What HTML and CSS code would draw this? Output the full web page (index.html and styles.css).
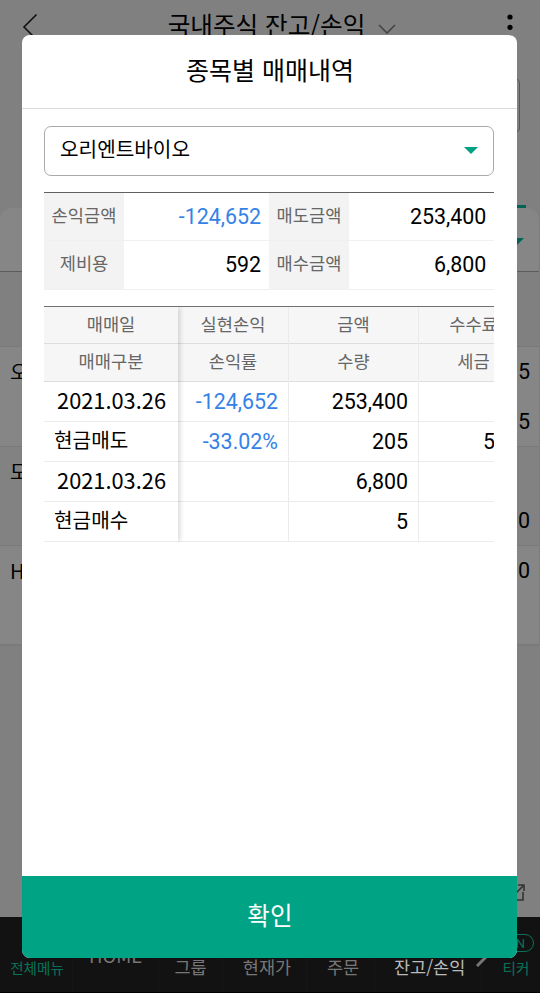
FILE: index.html
```
<!DOCTYPE html>
<html lang="ko">
<head>
    <meta charset="UTF-8">
    <meta name="viewport" content="width=device-width, initial-scale=1.0">
    <title>종목별 매매내역</title>
    <link rel="stylesheet" href="styles.css">
</head>
<body>
    <div class="app">
        <header class="app-header">
            <svg class="back" width="16" height="28" viewBox="0 0 16 28"><path d="M14.5 1.5 L2 14 L15 27"/></svg>
            <div class="app-title">
                <span>국내주식 잔고/손익</span>
                <svg width="18" height="10" viewBox="0 0 18 10"><path d="M1 1 L9 9 L17 1"/></svg>
            </div>
            <svg class="more" width="6" height="28" viewBox="0 0 6 28"><circle cx="3" cy="3" r="2.6"/><circle cx="3" cy="13.3" r="2.6"/><circle cx="3" cy="23.6" r="2.6"/></svg>
        </header>

        <main class="balance">
            <div class="account"></div>
            <div class="tab-line"></div>
            <div class="card">
                <div class="card-filter"><span class="arrow"></span></div>
                <div class="card-head"></div>
                <div class="stock"><div><span>오</span><b>5</b></div><div><b>5</b></div></div>
                <div class="stock"><div><span>모</span></div><div><b>0</b></div></div>
                <div class="stock"><div><span>H</span><b>0</b></div><div></div></div>
            </div>
            <svg class="popup-icon" width="20" height="20" viewBox="0 0 20 20"><path d="M8 4 H2 V18 H17 V10 M8 13 L18 3 M12 3 H18 V9"/></svg>
        </main>

        <nav class="bottom-nav">
            <div class="nav-item all"><svg width="32" height="17" viewBox="0 0 32 17"><path d="M1 1 H31 M1 8 H31 M1 15 H31"/></svg>전체메뉴</div>
            <div class="nav-item home">HOME</div>
            <div class="nav-item group">그룹</div>
            <div class="nav-item price">현재가</div>
            <div class="nav-item order">주문</div>
            <div class="nav-item active">잔고/손익<svg width="12" height="12" viewBox="0 0 12 12"><path d="M1 11 L11 1"/></svg></div>
            <div class="nav-item ticker"><span class="on">ON</span>티커</div>
        </nav>
    </div>

    <div class="modal">
        <h1>종목별 매매내역</h1>
        <div class="modal-body">
            <div class="select">오리엔트바이오<span class="arrow"></span></div>

            <div class="summary">
                <div class="label">손익금액</div>
                <div class="value minus">-124,652</div>
                <div class="label">매도금액</div>
                <div class="value">253,400</div>
                <div class="label">제비용</div>
                <div class="value">592</div>
                <div class="label">매수금액</div>
                <div class="value">6,800</div>
            </div>

            <div class="history">
                <div class="col fixed">
                    <div class="th">매매일</div>
                    <div class="th">매매구분</div>
                    <div class="td date">2021.03.26</div>
                    <div class="td type">현금매도</div>
                    <div class="td date">2021.03.26</div>
                    <div class="td type">현금매수</div>
                </div>
                <div class="col profit">
                    <div class="th">실현손익</div>
                    <div class="th">손익률</div>
                    <div class="td minus">-124,652</div>
                    <div class="td minus">-33.02%</div>
                    <div class="td"></div>
                    <div class="td"></div>
                </div>
                <div class="col amount">
                    <div class="th">금액</div>
                    <div class="th">수량</div>
                    <div class="td">253,400</div>
                    <div class="td">205</div>
                    <div class="td">6,800</div>
                    <div class="td">5</div>
                </div>
                <div class="col fee">
                    <div class="th">수수료</div>
                    <div class="th">세금</div>
                    <div class="td"></div>
                    <div class="td">5</div>
                    <div class="td"></div>
                    <div class="td"></div>
                </div>
            </div>
        </div>
        <button class="confirm">확인</button>
    </div>
</body>
</html>
```

FILE: styles.css
```
* {
    box-sizing: border-box;
}
body {
    margin: 0;
    position: relative;
    width: 540px;
    height: 993px;
    overflow: hidden;
    font-family: Roboto, "Noto Sans CJK KR", sans-serif;
    color: #000;
}
svg {
    fill: none;
    stroke-width: 1.6;
    flex: none;
}

/* dimmed screen behind the dialog */
.app {
    display: flex;
    flex-direction: column;
    height: 993px;
    background: #808080;
}
.app-header {
    display: flex;
    justify-content: space-between;
    align-items: flex-start;
    height: 78px;
    padding: 13px 27px 0 22px;
    font-family: "Noto Sans CJK KR", sans-serif;
}
.back {
    stroke: #111;
}
.app-title {
    display: flex;
    align-items: center;
    gap: 13px;
    height: 26px;
    margin: -2px 0 0 19px;
    font-size: 24.6px;
    line-height: 26px;
}
.app-title svg {
    stroke: #444;
    margin-top: 10px;
}
.more {
    fill: #000;
    margin-top: 1px;
}
.balance {
    flex: 1;
    display: flex;
    flex-direction: column;
}
.account {
    height: 55px;
    margin: 0 20px 0 24px;
    border: 1px solid #585858;
    border-radius: 5px;
}
.tab-line {
    width: 110px;
    height: 4px;
    margin: 72px 14px 0 auto;
    background: #006450;
}
.card {
    height: 437px;
    margin-top: -1px;
    background: #868686;
    border-right: 1px solid #7c7c7c;
    border-bottom: 1px solid #7b7b7b;
    border-radius: 12px 12px 0 0;
}
.card-filter {
    display: flex;
    justify-content: flex-end;
    height: 64px;
    padding: 30px 15px 0 0;
    border-bottom: 1px solid #5c5c5c;
}
.arrow {
    height: 0;
    border: 7px solid transparent;
    border-top-color: #00a182;
    border-bottom: 0;
}
.card-filter .arrow {
    border-top-color: #006450;
}
.card-head {
    height: 75px;
    background: #808080;
    border-bottom: 1px solid #7a7a7a;
}
.stock {
    height: 99.5px;
    padding: 0 9px 0 10px;
    border-bottom: 1px solid #7a7a7a;
    font-size: 21.5px;
}
.stock:nth-child(4) {
    background: #828282;
}
.stock div {
    display: flex;
    height: 49.5px;
    align-items: center;
}
.stock span {
    font-family: "Noto Sans CJK KR", sans-serif;
    font-size: 20px;
}
.stock b {
    margin-left: auto;
    font-weight: 400;
}
.popup-icon {
    margin: auto 14px 15px auto;
    stroke: #333;
}
.bottom-nav {
    display: flex;
    height: 76px;
    background: #121212;
    border-bottom: 1px solid #000;
    font-family: "Noto Sans CJK KR", sans-serif;
    font-size: 17.5px;
    color: #777;
}
.nav-item {
    display: flex;
    flex-direction: column;
    align-items: center;
    justify-content: flex-end;
    padding-bottom: 13px;
    line-height: 24px;
    white-space: nowrap;
    border-right: 1px solid #161616;
}
.all {
    width: 73px;
    padding-bottom: 12px;
    padding-left: 2px;
    font-size: 14.6px;
    color: #087259;
}
.all svg {
    stroke: #087259;
    margin-bottom: 7px;
}
.home {
    width: 86px;
    padding-bottom: 25px;
    font-size: 18.5px;
}
.group {
    width: 64px;
}
.price {
    width: 84px;
    padding-left: 5px;
}
.order {
    width: 68px;
    padding-left: 5px;
}
.active {
    flex-direction: row;
    align-items: flex-end;
    justify-content: flex-start;
    gap: 11px;
    width: 107px;
    padding-left: 19px;
    color: #bbb;
}
.active svg {
    stroke: #777;
    stroke-width: 3;
    margin-bottom: 12px;
}
.ticker {
    flex: 1;
    border: 0;
    padding-left: 10px;
    padding-bottom: 12px;
    font-size: 14.6px;
    color: #087259;
}
.on {
    width: 36px;
    height: 18px;
    margin-bottom: 4px;
    border: 1.5px solid #087259;
    border-radius: 9px;
    font: 13px/17px Roboto, sans-serif;
    text-align: right;
    padding-right: 8px;
}

/* dialog */
.modal {
    position: absolute;
    left: 22.4px;
    top: 34.5px;
    width: 495px;
    height: 923px;
    display: flex;
    flex-direction: column;
    overflow: hidden;
    background: #fff;
    border-radius: 8px;
}
h1 {
    height: 74px;
    margin: 0;
    border-bottom: 1px solid #d9d9d9;
    font: 400 25px/68px "Noto Sans CJK KR", sans-serif;
    text-align: center;
}
.modal-body {
    flex: 1;
    padding: 17.5px 23px 0 21.6px;
}
.select {
    display: flex;
    align-items: center;
    justify-content: space-between;
    height: 50px;
    padding: 0 15px 4px;
    border: 1.5px solid #aaa;
    border-radius: 7px;
    font: 20.2px/28px "Noto Sans CJK KR", sans-serif;
}
.select .arrow {
    margin-top: 3px;
}
.summary {
    display: grid;
    grid-template-columns: 80px 145px 80px 1fr;
    grid-template-rows: 48px 49px;
    margin-top: 15.5px;
    border-top: 1px solid #606060;
    font-size: 21.4px;
}
.summary div {
    line-height: 47px;
    border-bottom: 1px solid #f0f0f0;
}
.summary .label, .th {
    font-family: "Noto Sans CJK KR", sans-serif;
    font-size: 17.6px;
    color: #666;
    text-align: center;
}
.summary .label {
    background: #f3f3f3;
    line-height: 43px;
}
.value {
    padding-right: 8px;
    text-align: right;
}
.minus {
    color: #3482e8;
}
.history {
    display: flex;
    margin-top: 16px;
    border-top: 1px solid #707070;
    overflow: hidden;
}
.col {
    flex: none;
    width: 130px;
    border-right: 1px solid #ebebeb;
}
.th {
    height: 37px;
    line-height: 33px;
    background: #f6f6f6;
    border-bottom: 1px solid #ddd;
}
.th + .th {
    height: 38px;
}
.td {
    height: 40px;
    padding-right: 9px;
    border-bottom: 1px solid #ebebeb;
    font-size: 21.4px;
    line-height: 40px;
    text-align: right;
}
.fixed {
    position: relative;
    width: 134px;
    border: 0;
    box-shadow: 1px 0 6px rgba(0, 0, 0, 0.2);
}
.fixed .td {
    background: #fff;
    font-family: "Noto Sans CJK KR", sans-serif;
    line-height: 36px;
}
.fixed .date {
    padding-right: 12px;
    font-size: 21.8px;
}
.fixed .type {
    padding-left: 10px;
    font-size: 20.2px;
    text-align: left;
}
.profit {
    width: 111px;
}
.profit .td, .amount .td {
    padding-right: 10px;
}
.fee {
    width: 110px;
}
.fee .td {
    padding-right: 33px;
}
.confirm {
    height: 81.5px;
    padding: 0 0 4px;
    border: 0;
    background: #00a384;
    color: #fff;
    font: 400 24.5px/36px "Noto Sans CJK KR", sans-serif;
}
```
